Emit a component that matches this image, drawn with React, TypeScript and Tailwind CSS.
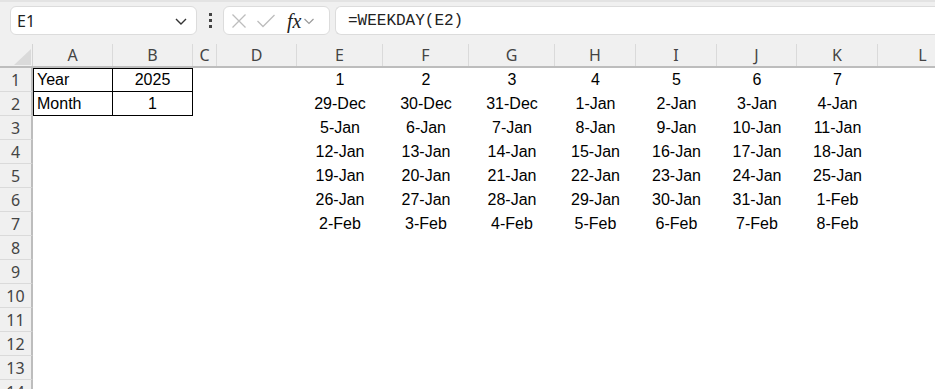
import React from "react";

const cols: { l: string; w: number }[] = [
  { l: "A", w: 80 },
  { l: "B", w: 80 },
  { l: "C", w: 24 },
  { l: "D", w: 80 },
  { l: "E", w: 86 },
  { l: "F", w: 86 },
  { l: "G", w: 86 },
  { l: "H", w: 81 },
  { l: "I", w: 81 },
  { l: "J", w: 80 },
  { l: "K", w: 81 },
  { l: "L", w: 90 },
];

const data: string[][] = [
  ["1", "2", "3", "4", "5", "6", "7"],
  ["29-Dec", "30-Dec", "31-Dec", "1-Jan", "2-Jan", "3-Jan", "4-Jan"],
  ["5-Jan", "6-Jan", "7-Jan", "8-Jan", "9-Jan", "10-Jan", "11-Jan"],
  ["12-Jan", "13-Jan", "14-Jan", "15-Jan", "16-Jan", "17-Jan", "18-Jan"],
  ["19-Jan", "20-Jan", "21-Jan", "22-Jan", "23-Jan", "24-Jan", "25-Jan"],
  ["26-Jan", "27-Jan", "28-Jan", "29-Jan", "30-Jan", "31-Jan", "1-Feb"],
  ["2-Feb", "3-Feb", "4-Feb", "5-Feb", "6-Feb", "7-Feb", "8-Feb"],
];

const cellFont = { fontFamily: '"Liberation Sans", Arial, sans-serif' };
const uiFont = { fontFamily: '"Noto Sans", "Open Sans", sans-serif' };

function Cell({ w, children, align = "center", box }: { w: number; children?: React.ReactNode; align?: "left" | "center"; box?: string }) {
  return (
    <div
      className={`h-full shrink-0 flex items-center text-[16px] text-black ${align === "left" ? "justify-start pl-[3px]" : "justify-center"} ${box ?? ""}`}
      style={{ width: w, ...cellFont }}
    >
      {children}
    </div>
  );
}

export default function App() {
  const rows = Array.from({ length: 14 }, (_, i) => i + 1);
  return (
    <div className="w-[935px] h-[389px] overflow-hidden bg-white relative">
      {/* Top bar */}
      <div className="h-[44px] bg-[#f0f0f0] border-t-2 border-[#e3e3e3] flex items-start pt-[4px]">
        <div className="ml-[10px] w-[187px] h-[29px] bg-white border border-[#dcdcdc] rounded-[6px] flex items-center justify-between pl-[6px] pr-[8px]">
          <span className="text-[16px] text-[#222]" style={uiFont}>E1</span>
          <svg width="14" height="10" viewBox="0 0 14 10"><path d="M2 3 L7 8 L12 3" fill="none" stroke="#333" strokeWidth="1.4" /></svg>
        </div>
        <div className="w-[26px] h-[29px] flex flex-col items-center justify-center gap-[3px]">
          <div className="w-[3px] h-[3px] bg-[#444]" />
          <div className="w-[3px] h-[3px] bg-[#444]" />
          <div className="w-[3px] h-[3px] bg-[#444]" />
        </div>
        <div className="w-[107px] h-[29px] bg-white border border-[#dcdcdc] rounded-[6px] flex items-center pl-[7px]">
          <svg width="16" height="16" viewBox="0 0 16 16"><path d="M1.5 1.5 L14.5 14.5 M14.5 1.5 L1.5 14.5" stroke="#bdbdbd" strokeWidth="1.3" /></svg>
          <svg className="ml-[9px]" width="20" height="16" viewBox="0 0 20 16"><path d="M1.5 8 L7 13.5 L18.5 2" fill="none" stroke="#bdbdbd" strokeWidth="1.3" /></svg>
          <span className="ml-[11px] text-[20px] italic text-[#222] leading-none" style={{ fontFamily: '"Liberation Serif", "Times New Roman", serif' }}>
            fx
          </span>
          <svg className="ml-[2px]" width="12" height="10" viewBox="0 0 12 10"><path d="M1.5 3 L6 7.5 L10.5 3" fill="none" stroke="#9a9a9a" strokeWidth="1.2" /></svg>
        </div>
        <div className="ml-[5px] flex-1 h-[29px] bg-white border border-[#dcdcdc] rounded-l-[6px] border-r-0 flex items-center pl-[12px]">
          <span className="text-[16px] text-[#222]" style={{ fontFamily: '"Liberation Mono", "DejaVu Sans Mono", monospace' }}>=WEEKDAY(E2)</span>
        </div>
      </div>

      {/* Column header */}
      <div className="h-[24px] bg-[#f0f0f0] flex border-b-2 border-[#bdbdbd]">
        <div className="w-[33px] h-full shrink-0 relative border-r border-[#d4d4d4]">
          <svg className="absolute left-[14px] top-[5px]" width="17" height="16" viewBox="0 0 17 16"><path d="M17 0 L17 16 L0 16 Z" fill="#dadada" /></svg>
        </div>
        {cols.map((c) => (
          <div
            key={c.l}
            className="h-full shrink-0 flex items-center justify-center text-[16px] text-[#444] border-r border-[#dadada]"
            style={{ width: c.w, ...uiFont }}
          >
            {c.l}
          </div>
        ))}
      </div>

      {/* Rows */}
      {rows.map((r) => (
        <div key={r} className="h-[24px] flex">
          <div
            className="w-[33px] h-full shrink-0 bg-[#f0f0f0] border-r-2 border-[#bdbdbd] border-b border-b-[#dadada] flex items-center justify-center text-[16px] text-[#444]"
            style={uiFont}
          >
            {r}
          </div>
          {r === 1 || r === 2 ? (
            <>
              <Cell w={80} align="left" box={`border-l border-r border-black border-b ${r === 1 ? "border-t" : ""}`}>
                {r === 1 ? "Year" : "Month"}
              </Cell>
              <Cell w={80} box={`border-r border-black border-b ${r === 1 ? "border-t" : ""}`}>
                {r === 1 ? "2025" : "1"}
              </Cell>
            </>
          ) : (
            <>
              <Cell w={80} />
              <Cell w={80} />
            </>
          )}
          <Cell w={24} />
          <Cell w={80} />
          {cols.slice(4, 11).map((c, i) => (
            <Cell key={c.l} w={c.w}>
              {r <= 7 ? data[r - 1][i] : ""}
            </Cell>
          ))}
        </div>
      ))}
    </div>
  );
}
